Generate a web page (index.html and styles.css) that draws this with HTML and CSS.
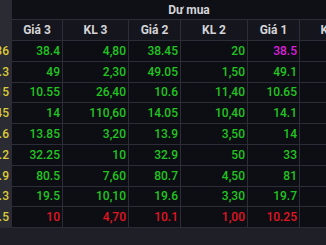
FILE: index.html
```html
<!DOCTYPE html>
<html lang="vi">
<head>
<meta charset="utf-8">
<link rel="stylesheet" href="styles.css">
</head>
<body>
<div class="board">
  <div class="cell stub top"></div>
  <div class="cell group">Dư mua</div>

  <div class="cell stub head"></div>
  <div class="cell head">Giá 3</div>
  <div class="cell head">KL 3</div>
  <div class="cell head">Giá 2</div>
  <div class="cell head">KL 2</div>
  <div class="cell head">Giá 1</div>
  <div class="cell head">KL 1</div>

  <div class="cell stub">38.36</div>
  <div class="cell up">38.4</div><div class="cell up">4,80</div><div class="cell up">38.45</div><div class="cell up">20</div><div class="cell ceil">38.5</div><div class="cell"></div>

  <div class="cell stub">49.3</div>
  <div class="cell up">49</div><div class="cell up">2,30</div><div class="cell up">49.05</div><div class="cell up">1,50</div><div class="cell up">49.1</div><div class="cell"></div>

  <div class="cell stub">10.15</div>
  <div class="cell up">10.55</div><div class="cell up">26,40</div><div class="cell up">10.6</div><div class="cell up">11,40</div><div class="cell up">10.65</div><div class="cell"></div>

  <div class="cell stub">14.45</div>
  <div class="cell up">14</div><div class="cell up">110,60</div><div class="cell up">14.05</div><div class="cell up">10,40</div><div class="cell up">14.1</div><div class="cell"></div>

  <div class="cell stub">13.6</div>
  <div class="cell up">13.85</div><div class="cell up">3,20</div><div class="cell up">13.9</div><div class="cell up">3,50</div><div class="cell up">14</div><div class="cell"></div>

  <div class="cell stub">32.2</div>
  <div class="cell up">32.25</div><div class="cell up">10</div><div class="cell up">32.9</div><div class="cell up">50</div><div class="cell up">33</div><div class="cell"></div>

  <div class="cell stub">80.9</div>
  <div class="cell up">80.5</div><div class="cell up">7,60</div><div class="cell up">80.7</div><div class="cell up">4,50</div><div class="cell up">81</div><div class="cell"></div>

  <div class="cell stub">19.3</div>
  <div class="cell up">19.5</div><div class="cell up">10,10</div><div class="cell up">19.6</div><div class="cell up">3,30</div><div class="cell up">19.7</div><div class="cell"></div>

  <div class="cell stub">10.5</div>
  <div class="cell down">10</div><div class="cell down">4,70</div><div class="cell down">10.1</div><div class="cell down">1,00</div><div class="cell down">10.25</div><div class="cell"></div>
</div>
</body>
</html>
```
FILE: styles.css
```css
html, body {
  margin: 0;
  padding: 0;
  width: 326px;
  height: 245px;
  overflow: hidden;
  background: #1e1f27;
}

.board {
  display: grid;
  grid-template-columns: 12px 51px 66px 52px 67px 52px 66px;
  grid-template-rows: 20px 21px repeat(9, 20.8px);
  width: 366px;
  font-family: Roboto, "Liberation Sans", Arial, sans-serif;
  font-size: 12px;
  font-weight: 500;
  background: #0d0e14;
}

.cell {
  box-sizing: border-box;
  border-right: 1px solid #2c2d36;
  border-bottom: 1px solid #2c2d36;
  display: flex;
  align-items: center;
  justify-content: flex-end;
  padding-right: 2px;
  overflow: hidden;
  white-space: nowrap;
  color: #21c521;
}

.stub {
  background: #2a2b33;
  color: #dccb3a;
  padding-right: 3px;
  border-right: none;
  border-bottom-color: #2a2b33;
}

.top {
  border-bottom: none;
}

.group {
  grid-column: span 6;
  justify-content: center;
  padding: 0;
  border-right: none;
  color: #d4d4d8;
  font-weight: 700;
  background: #0f1016;
}

.head {
  justify-content: center;
  padding: 0;
  color: #d4d4d8;
  font-weight: 700;
  background: #15161d;
}

.stub.head {
  background: #2a2b33;
}

.up { color: #21c521; }
.down { color: #e01522; }
.ceil { color: #dd1fdd; }
```
